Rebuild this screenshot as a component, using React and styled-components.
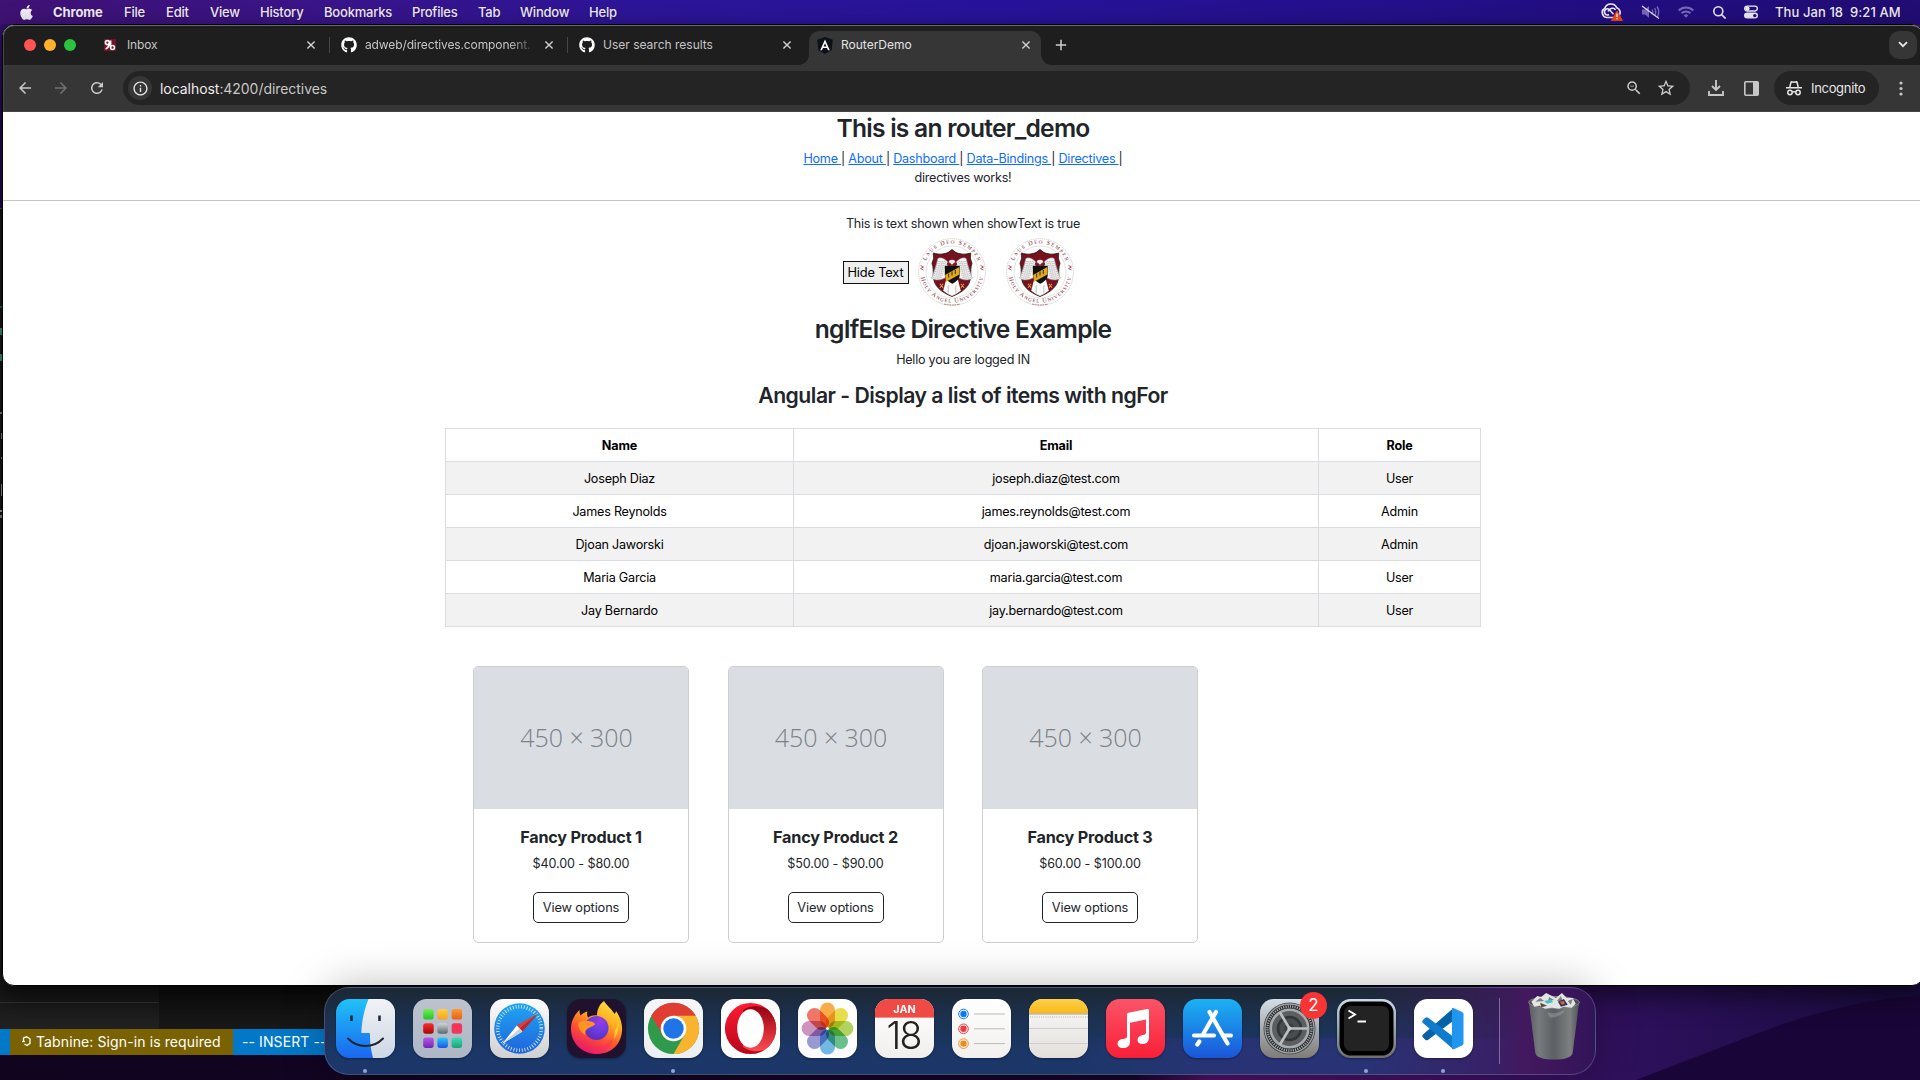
import React from "react";
import styled, { createGlobalStyle } from "styled-components";
import { FaApple, FaGithub } from "react-icons/fa";
import { MdArrowBack, MdArrowForward, MdRefresh, MdInfoOutline, MdZoomOut, MdStarBorder } from "react-icons/md";

const GlobalStyle = createGlobalStyle`
  *, *::before, *::after { box-sizing: border-box; }
  html, body { margin: 0; height: 1080px; overflow: hidden; background: #10041f; }
  body { font-family: Inter, "Liberation Sans", sans-serif; }
  h3, h4, h5, p { margin: 0; }
`;

const Desktop = styled.div`
  position: relative;
  width: 1920px;
  height: 1080px;
  overflow: hidden;
  background: linear-gradient(180deg, #38106e 0, #250a52 120px, #14052b 800px, #10041f 100%);
`;

const Wallpaper = styled.svg`
  position: absolute;
  left: 0;
  bottom: 0;
`;

/* ---------- menu bar ---------- */

const MenuBar = styled.header`
  position: relative;
  display: flex;
  align-items: center;
  justify-content: space-between;
  height: 24px;
  padding: 0 18px 0 18px;
  background: linear-gradient(90deg, #3f1274 0, #3a1488 300px, #2c1598 640px, #27139a 1000px, #220e80 1650px, #220d74 100%);
  color: #f1edf8;
  font-size: 13px;
  text-shadow: 0 1px 2px rgba(0, 0, 0, 0.25);
`;

const MenuGroup = styled.div`
  display: flex;
  align-items: center;
  height: 24px;
`;

const MenuItem = styled.span`
  width: ${(p) => p.$w}px;
  font-weight: ${(p) => (p.$bold ? 700 : 500)};
  letter-spacing: ${(p) => p.$ls ?? -0.2}px;
  white-space: nowrap;
`;

const StatusIcon = styled.svg`
  display: block;
  margin-right: ${(p) => p.$gap}px;
`;

/* ---------- background editor window ---------- */

const Editor = styled.section`
  position: absolute;
  left: 0;
  top: 208px;
  width: 1480px;
  height: 847px;
  display: flex;
  flex-direction: column;
  justify-content: flex-end;
  border-top: 1px solid #555;
  background:
    linear-gradient(#2f6e50, #2f6e50) 0 97px / 2px 2px no-repeat,
    linear-gradient(#3f9a72, #3f9a72) 0 119px / 2px 7px no-repeat,
    linear-gradient(#3f9a72, #3f9a72) 0 145px / 2px 7px no-repeat,
    linear-gradient(#9c8466, #9c8466) 0 203px / 2px 2px no-repeat,
    linear-gradient(#888, #888) 1px 224px / 1px 6px no-repeat,
    linear-gradient(#9c8466, #9c8466) 1px 248px / 1px 2px no-repeat,
    linear-gradient(#999, #999) 1px 275px / 1px 12px no-repeat,
    linear-gradient(#aaa, #aaa) 0 301px / 2px 2px no-repeat,
    linear-gradient(#888, #888) 0 306px / 2px 3px no-repeat,
    #171717;
`;

const EditorPanes = styled.div`
  display: flex;
  height: 44px;
  background: linear-gradient(180deg, #0d0d0d, #191919);
`;

const SidePane = styled.div`
  width: 159px;
  height: 44px;
  padding-top: 17px;
  background: linear-gradient(180deg, #141414, #222222);
  &::before {
    content: "";
    display: block;
    height: 1px;
    background: #333;
  }
`;

const StatusBar = styled.div`
  display: flex;
  align-items: center;
  height: 26px;
  padding-left: 10px;
  background: #0178c8;
  color: #fff;
  font-size: 14px;
  white-space: nowrap;
`;

const TabnineItem = styled.div`
  display: flex;
  align-items: center;
  gap: 4px;
  width: 223px;
  height: 26px;
  padding: 0 0 2px 11px;
  background: #7a6203;
  letter-spacing: 0.11px;
`;

const ModeItem = styled.div`
  padding: 0 0 2px 9px;
  letter-spacing: 0.1px;
`;

/* ---------- browser window ---------- */

const BrowserWindow = styled.main`
  position: absolute;
  left: 2px;
  top: 24px;
  width: 1922px;
  height: 962px;
  display: flex;
  flex-direction: column;
  border: 1px solid #000;
  border-radius: 12px;
  overflow: hidden;
  background: #fff;
  box-shadow: 0 10px 28px rgba(0, 0, 0, 0.6);
`;

const TabStrip = styled.div`
  display: flex;
  align-items: center;
  height: 40px;
  flex: none;
  padding: 0 0 2px 20px;
  background: #1e1e1e;
  border-top: 1px solid #67676b;
  border-left: 1px solid #4a4a4a;
  border-radius: 11px 11px 0 0;
`;

const TrafficLights = styled.div`
  display: flex;
  gap: 8px;
  width: 80px;
`;

const Light = styled.span`
  width: 12px;
  height: 12px;
  border-radius: 50%;
  background: ${(p) => p.$color};
`;

const Tab = styled.div`
  position: relative;
  display: flex;
  align-items: center;
  width: ${(p) => p.$w}px;
  height: ${(p) => (p.$active ? 34 : 16)}px;
  align-self: ${(p) => (p.$active ? "flex-end" : "center")};
  padding: ${(p) => (p.$active ? "0 10px 6px 8px" : "0 13px 0 0")};
  margin-right: ${(p) => p.$gap ?? 0}px;
  margin-bottom: ${(p) => (p.$active ? -2 : 0)}px;
  border-right: ${(p) => (p.$divider ? "1px solid #474747" : "1px solid transparent")};
  color: ${(p) => (p.$active ? "#e3e3e3" : "#c5c5c5")};
  background: ${(p) => (p.$active ? "#363636" : "transparent")};
  border-radius: ${(p) => (p.$active ? "10px 10px 0 0" : 0)};
  ${(p) =>
    p.$active &&
    `
    border-right: 0;
    &::before, &::after {
      content: "";
      position: absolute;
      bottom: 0;
      width: 10px;
      height: 10px;
    }
    &::before {
      left: -10px;
      background: radial-gradient(circle at 0 0, transparent 9.5px, #363636 10px);
    }
    &::after {
      right: -10px;
      background: radial-gradient(circle at 100% 0, transparent 9.5px, #363636 10px);
    }
  `}
`;

const TabTitle = styled.span`
  flex: 1;
  margin-left: ${(p) => p.$ml ?? 8}px;
  margin-right: 12px;
  font-size: 12px;
  line-height: 16px;
  letter-spacing: ${(p) => p.$ls ?? 0}px;
  white-space: nowrap;
  ${(p) => p.$fade && "mask-image: linear-gradient(90deg, #000 86%, rgba(0, 0, 0, 0.2) 100%);"}
`;

const CloseIcon = () => (
  <svg width="10" height="10" viewBox="0 0 10 10" stroke="#cfcfcf" strokeWidth="1.4">
    <path d="M1.4 1.4l7.2 7.2M8.6 1.4L1.4 8.6" />
  </svg>
);

const NewTab = styled.div`
  display: flex;
  flex: 1;
  padding-left: 14px;
`;

const TabSearch = styled.div`
  display: flex;
  align-items: center;
  justify-content: center;
  width: 28px;
  height: 28px;
  margin-right: 6px;
  border-radius: 10px;
  background: #363636;
`;

const Toolbar = styled.div`
  display: flex;
  align-items: center;
  height: 47px;
  flex: none;
  padding-left: 12px;
  background: #363636;
  border-left: 1px solid #4a4a4a;
  border-bottom: 1px solid #444;
  color: #c9c9c9;
`;

const NavIcon = styled.span`
  display: flex;
  width: ${(p) => p.$w ?? 36}px;
  opacity: ${(p) => (p.$off ? 0.4 : 1)};
`;

const Omnibox = styled.div`
  display: flex;
  align-items: center;
  width: 1567px;
  height: 34px;
  padding: 0 14px 0 5px;
  border-radius: 17px;
  background: #242424;
`;

const SiteInfo = styled.span`
  display: flex;
  align-items: center;
  justify-content: center;
  width: 24px;
  height: 24px;
  margin-right: 8px;
  border-radius: 50%;
  background: #363636;
  color: #e3e3e3;
`;

const Url = styled.span`
  flex: 1;
  font-size: 14px;
  letter-spacing: -0.05px;
  color: #c7c7c7;
  b { font-weight: 400; color: #ececec; }
`;

const ToolIcons = styled.div`
  display: flex;
  align-items: center;
  color: #c7c7c7;
`;

const Incognito = styled.div`
  display: flex;
  align-items: center;
  gap: 9px;
  width: 105px;
  height: 34px;
  margin: 0 20px 0 15px;
  padding-left: 12px;
  border-radius: 17px;
  background: #242424;
  color: #e6e6e6;
  font-size: 13px;
  letter-spacing: -0.32px;
`;

/* ---------- page ---------- */

const Page = styled.div`
  display: flex;
  flex-direction: column;
  flex: 1;
  color: #212529;
  font-size: 12.6px;
  line-height: 19px;
  text-align: center;
`;

const Heading = styled.h3`
  margin-top: ${(p) => p.$mt}px;
  font-size: ${(p) => p.$size}px;
  font-weight: 600;
  line-height: 30px;
  letter-spacing: ${(p) => p.$ls}px;
`;

const Line = styled.p`
  margin-top: ${(p) => p.$mt ?? 0}px;
  height: 19px;
  letter-spacing: ${(p) => p.$ls ?? -0.24}px;
  white-space: pre;
`;

const RouteLink = styled.a`
  color: #0d6efd;
  text-decoration: underline;
`;

const Rule = styled.hr`
  width: 100%;
  height: 1px;
  margin: 13px 0 0;
  border: 0;
  background: #c4c6c8;
`;

const LogoRow = styled.div`
  display: flex;
  align-items: center;
  justify-content: center;
  margin-top: 5px;
  height: 68px;
  padding-right: 10px;
`;

const HideButton = styled.button`
  width: 66px;
  height: 23px;
  padding: 0;
  margin-right: 9px;
  border: 1px solid #111;
  background: #efefef;
  color: #000;
  font: 400 12.8px/19px Inter, "Liberation Sans", sans-serif;
  letter-spacing: -0.15px;
`;

const Seal = styled.svg`
  display: block;
  margin: 0 ${(p) => p.$gap}px 0 0;
`;

const Table = styled.div`
  display: grid;
  grid-template-columns: 348px 525px 162px;
  width: 1036px;
  margin: 18px 0 0 442px;
  border: solid #d9dce0;
  border-width: 1px 0 0 1px;
  color: #000;
`;

const Cell = styled.div`
  height: 33px;
  padding-top: 7px;
  border: solid #d9dce0;
  border-width: 0 1px 1px 0;
  background: ${(p) => (p.$striped ? "#f2f2f2" : "#fff")};
  font-weight: ${(p) => (p.$head ? 700 : 400)};
  letter-spacing: ${(p) => (p.$head ? -0.15 : -0.22)}px;
`;

const Cards = styled.div`
  display: flex;
  gap: 38.5px;
  margin: 39px 0 0 470px;
`;

const Card = styled.article`
  display: flex;
  flex-direction: column;
  align-items: center;
  width: 216px;
  height: 277px;
  overflow: hidden;
  border: 1px solid #cfcfcf;
  border-radius: 5px;
`;

const Placeholder = styled.div`
  display: flex;
  justify-content: center;
  width: 100%;
  height: 142px;
  padding: 53px 9px 0 0;
  background: #dadde2;
  color: #7c8287;
  font: 300 25px/34px "Open Sans", "Noto Sans", sans-serif;
  letter-spacing: -0.05px;
`;

const CardTitle = styled.h5`
  margin-top: 18px;
  font-size: 16.2px;
  line-height: 20px;
  font-weight: 700;
  letter-spacing: -0.2px;
`;

const Price = styled.p`
  margin-top: 7px;
  letter-spacing: -0.12px;
`;

const OptionsButton = styled.button`
  width: 96px;
  height: 31px;
  margin-top: 19px;
  padding: 0;
  border: 1px solid #212529;
  border-radius: 5px;
  background: #fff;
  color: #212529;
  font: 400 12.8px/19px Inter, "Liberation Sans", sans-serif;
  letter-spacing: -0.13px;
`;

/* ---------- dock ---------- */

const Dock = styled.footer`
  position: absolute;
  left: 324px;
  top: 987px;
  width: 1272px;
  height: 88px;
  display: flex;
  align-items: flex-start;
  gap: 18px;
  padding: 11px 0 0 11px;
  border: 1px solid rgba(160, 180, 220, 0.3);
  border-radius: 25px;
  background:
    linear-gradient(90deg, transparent 1040px, rgba(64, 24, 96, 0.7) 1170px, #43185f 1200px, #331458 100%),
    linear-gradient(90deg, transparent 740px, rgba(52, 48, 130, 0.5) 900px, rgba(52, 48, 130, 0.5) 100%) 0 50px no-repeat,
    linear-gradient(180deg, #1c2733 0, #1c3150 35%, #1b3767 75%, #1c3669 100%);
  box-shadow: 0 0 44px rgba(0, 0, 0, 0.28);
`;

const DockItem = styled.div`
  position: relative;
  display: flex;
  flex-direction: column;
  align-items: center;
  width: 59px;
  height: 76px;
  svg { display: block; overflow: visible; filter: drop-shadow(0 1px 1px rgba(0, 0, 0, 0.35)); }
  &::after {
    content: "";
    width: 4px;
    height: 4px;
    margin: 11px 1px 0 0;
    border-radius: 50%;
    background: ${(p) => (p.$running ? "#93a3da" : "transparent")};
  }
`;

const Badge = styled.span`
  position: absolute;
  right: -8px;
  top: -7px;
  width: 27px;
  height: 27px;
  border-radius: 50%;
  background: #f73534;
  color: #fff;
  font-size: 17px;
  line-height: 27px;
  text-align: center;
`;

const DockDivider = styled.i`
  width: 1px;
  height: 66px;
  margin: -1px 9px 0 8px;
  background: rgba(190, 165, 220, 0.55);
`;

const TrashIcon = styled.svg`
  display: block;
  margin-top: -6px;
`;

/* ---------- drawings ---------- */

const feathers = Array.from({ length: 9 }, (_, i) => i);

function UniversitySeal({ id, gap }) {
  return (
    <Seal $gap={gap} width="68" height="68" viewBox="0 0 68 68">
      <defs>
        <path id={`${id}-top`} d="M6.2 31A27.9 27.9 0 0 1 61.8 31" />
        <path id={`${id}-bottom`} d="M2.6 38A31.8 31.8 0 0 0 65.4 38" />
      </defs>
      <circle cx="34" cy="34" r="33.3" fill="#fff" stroke="#c4bcbd" strokeWidth=".7" strokeDasharray="1.4 .8" />
      <circle cx="34" cy="34" r="26" fill="none" stroke="#d9d9d9" strokeWidth=".7" />
      <g fill="#7b1a2a" fontFamily="Liberation Serif, serif">
        <text fontSize="6" textAnchor="middle">
          <textPath href={`#${id}-top`} startOffset="50%" textLength="66">
            L<tspan fontSize="5">AUS</tspan> D<tspan fontSize="5">EO</tspan> S<tspan fontSize="5">EMPER</tspan>
          </textPath>
        </text>
        <text fontSize="6" textAnchor="middle">
          <textPath href={`#${id}-bottom`} startOffset="50%" textLength="86">
            H<tspan fontSize="5">OLY</tspan> A<tspan fontSize="5">NGEL</tspan> U<tspan fontSize="5">NIVERSITY</tspan>
          </textPath>
        </text>
      </g>
      <g fill="none" stroke="#b84a55" strokeWidth=".9">
        <path d="M2.5 27.5l3 1.5-3 1.5 3 1.5M62.5 27.5l3 1.5-3 1.5 3 1.5" />
      </g>
      <g transform="translate(34 35) scale(1.1 1.02) translate(-34 -35)">
        <path d="M34 12l3 2.5c4 2.3 9 2.6 14 1-.8 4 0 7 1.200 10-1.5 4-1 8-1.200 13-.8 10-7 15-17 19.500-10-4.500-16.200-9.500-17-19.500-.2-5 .3-9-1.200-13 1.200-3 2-6 1.200-10 5 1.600 10 1.300 14-1z" fill="#76111f" stroke="#2b1a14" strokeWidth=".8" />
        <path d="M29 40h10l3 12.500q-4 3.500-8 5-4-1.500-8-5z" fill="#fbfbfb" />
        {[0, 1].map((side) => (
          <g key={side} transform={side ? "translate(68 0) scale(-1 1)" : undefined}>
            <path d="M30 24c-3-3.500-7-5-9-3-1 5-3 12-5.500 19 3 3 8 2 12 0l3-4z" fill="#f4f4f4" stroke="#8a8a8a" strokeWidth=".5" />
            {feathers.map((i) => (
              <path key={i} d={`M${20.500 - i * 0.500} ${23 + i * 2}q4 2.200 8.500 0`} fill="none" stroke="#8d8d8d" strokeWidth=".6" strokeDasharray="1.500 .5" />
            ))}
          </g>
        ))}
        <circle cx="34" cy="25" r="3.100" fill="#efe7e2" />
        <path d="M29 26.500c1-2 2-2.500 3-1.500l2 2 2-2c1-1 2-.5 3 1.500l-2 1.500h-6z" fill="#7b1a2a" />
        <path d="M27.500 28h13.500v9c0 4-3 6.500-6.700 8.500-3.800-2-6.800-4.500-6.800-8.500z" fill="#111" />
        <path d="M27.700 37l13-8v7.500l-12 7z" fill="#e3a81c" />
        <path d="M31 35.500v4M34 33.500v4M37 32v4" stroke="#32250a" strokeWidth=".9" />
        <path d="M30.500 47v8M37.500 47v8" stroke="#aaa" strokeWidth=".7" />
        <path d="M23 45.500l3 4M26 45.500l-3 4M42 45.500l3 4M45 45.500l-3 4" stroke="#d8973a" strokeWidth="1" />
      </g>
      <path d="M26 66q8 2 16 0" fill="none" stroke="#b0606a" strokeWidth=".8" strokeDasharray="2 .6" />
    </Seal>
  );
}

const Tile = ({ id, from, to, stroke, children }) => (
  <svg width="59" height="59" viewBox="0 0 59 59">
    <defs>
      <linearGradient id={id} x1="0" y1="0" x2="0" y2="1">
        <stop offset="0" stopColor={from} />
        <stop offset="1" stopColor={to} />
      </linearGradient>
      <clipPath id={`${id}-clip`}>
        <rect width="59" height="59" rx="13.500" />
      </clipPath>
    </defs>
    <g clipPath={`url(#${id}-clip)`}>
      <rect width="59" height="59" fill={`url(#${id})`} />
      {children}
    </g>
    {stroke && <rect x=".5" y=".5" width="58" height="58" rx="13" fill="none" stroke={stroke} />}
  </svg>
);

const Finder = () => (
  <Tile id="finder" from="#1fc3f8" to="#1a66ef">
    <defs>
      <linearGradient id="finder-face" x1="0" y1="0" x2="0" y2="1">
        <stop offset="0" stopColor="#f1f2f5" />
        <stop offset="1" stopColor="#cdd8e6" />
      </linearGradient>
    </defs>
    <path d="M32.500 0C28 11 25.800 22 25.300 34H33c.8 0 1 .4 1 1.200C33.800 43 34.800 51 37 59h22V0z" fill="url(#finder-face)" />
    <path d="M15.500 16.500v5.500M43.500 16.500v5.500" stroke="#1c2b3c" strokeWidth="2.600" />
    <path d="M12 39.500c9.500 10 25.500 10 35 0" fill="none" stroke="#1c2632" strokeWidth="2" strokeLinecap="round" />
  </Tile>
);

const padColors = [
  ["#6ef04f", "#27c32b"], ["#ffd040", "#f7a11c"], ["#ff9a2c", "#e5601b"],
  ["#fb2d2d", "#a90508"], ["#cfd6da", "#5f6669"], ["#ff2f56", "#ea3b5b"],
  ["#b55ae8", "#7427b5"], ["#29c9f7", "#1b55e6"], ["#41dcb8", "#1ba275"],
];
const Launchpad = () => (
  <Tile id="launchpad" from="#bcc3ce" to="#aeb7c6">
    {padColors.map(([a, b], i) => (
      <g key={a}>
        <linearGradient id={`pad-${i}`} x1="0" y1="0" x2="0" y2="1">
          <stop offset="0" stopColor={a} />
          <stop offset="1" stopColor={b} />
        </linearGradient>
        <rect x={10.200 + (i % 3) * 14.200} y={10 + Math.floor(i / 3) * 14.200} width="10.500" height="10.500" rx="2.600" fill={`url(#pad-${i})`} />
      </g>
    ))}
  </Tile>
);

const Safari = () => (
  <Tile id="safari" from="#fdfdfd" to="#d0d0d2">
    <defs>
      <linearGradient id="safari-dial" x1="0" y1="0" x2="0" y2="1">
        <stop offset="0" stopColor="#1fa6f2" />
        <stop offset="1" stopColor="#1f63dc" />
      </linearGradient>
    </defs>
    <circle cx="29.500" cy="29.500" r="25.300" fill="url(#safari-dial)" />
    <circle cx="29.500" cy="29.500" r="21.800" fill="none" stroke="#e4f1fc" strokeWidth="3.600" strokeDasharray=".8 2.004" />
    <path d="M48 14.500L26.800 26.600l5.600 5.800z" fill="#e23c3a" />
    <path d="M48 14.500L29.600 29.500l2.800 2.900z" fill="#b5282c" />
    <path d="M12 45l14.800-18.400 5.600 5.800z" fill="#fff" />
    <path d="M12 45l17.600-15.500 2.800 2.900z" fill="#cfd3d8" />
  </Tile>
);

const Firefox = () => (
  <Tile id="firefox" from="#20122f" to="#20122f">
    <defs>
      <linearGradient id="fox" x1=".8" y1="0" x2=".3" y2="1">
        <stop offset="0" stopColor="#ffe545" />
        <stop offset=".35" stopColor="#ffab1e" />
        <stop offset=".65" stopColor="#ff5232" />
        <stop offset="1" stopColor="#e4136a" />
      </linearGradient>
      <radialGradient id="fox-globe" cx=".65" cy=".2" r=".9">
        <stop offset="0" stopColor="#9a3ce0" />
        <stop offset=".5" stopColor="#6a3be0" />
        <stop offset="1" stopColor="#5a2bb4" />
      </radialGradient>
    </defs>
    <path d="M37 2c2 4 8 8 10.500 13 1-1 1.500-2 1.500-3 5 7 6.500 14 6 20C54 46 43.500 55 30 55 15.500 55 4.500 45 4 30.500 3.800 23 7 16 12.500 11c0 2 .3 4 1 5.500 2-2 4.500-3.500 7-4-.8 2-.5 4 .5 6 3-2 7-2.500 9-2 0-5 2-11 7-14.500z" fill="url(#fox)" />
    <circle cx="29.500" cy="29" r="12" fill="url(#fox-globe)" />
    <path d="M11 24c4-2 9-2.500 13-1.500 2.500.6 5 2 3.500 3.500-2 1.700-4.500 2-6.500 3.500-2.500 1.500-3.500 4-2 6.500-5-2-8-6.500-8-12z" fill="#ff9423" />
    <path d="M41 17c3 4 7 8 6.500 15 3-3 3.500-7 3-11 2 6 1 14-3.500 19 2-9-1-17-6-23z" fill="#ffd23a" fillOpacity=".8" />
    <path d="M6 34c3 10 13 16 24 14 7-1 12-4 16-9-2 10-9 16-18 15.500C17 54 8 46 6 34z" fill="#f5256a" fillOpacity=".35" />
  </Tile>
);

const Chrome = () => (
  <Tile id="chrome" from="#f5f6f8" to="#eceef1">
    <circle cx="29.500" cy="29.500" r="25.600" fill="#2f9a4c" />
    <path d="M29.500 29.500L7.300 16.700A25.600 25.600 0 0 1 51.700 16.700z" fill="#e03e33" />
    <path d="M29.500 16.700h22.200A25.600 25.600 0 0 1 29.500 55.100L40.600 35.900z" fill="#f9b32e" />
    <path d="M29.500 16.700H7.400l11 19.200z" fill="#e03e33" />
    <circle cx="29.500" cy="29.500" r="12.800" fill="#fff" />
    <circle cx="29.500" cy="29.500" r="10.200" fill="#1f74e8" />
  </Tile>
);

const Opera = () => (
  <Tile id="opera" from="#ffffff" to="#ffffff">
    <defs>
      <linearGradient id="opera-o" x1="0" y1="0" x2="0" y2="1">
        <stop offset="0" stopColor="#ff1b32" />
        <stop offset="1" stopColor="#b5081c" />
      </linearGradient>
      <linearGradient id="opera-in" x1="0" y1="0" x2="0" y2="1">
        <stop offset="0" stopColor="#960010" />
        <stop offset="1" stopColor="#ff4b4f" />
      </linearGradient>
    </defs>
    <circle cx="29.500" cy="29.500" r="25.600" fill="url(#opera-o)" />
    <path d="M22 11c8-5.500 18-4 24.500-.8A25.600 25.600 0 0 1 46.500 48.800C40 54 29 53 22 48z" fill="url(#opera-in)" />
    <ellipse cx="29.500" cy="29.500" rx="13.300" ry="19.300" fill="#fff" />
  </Tile>
);

const petals = ["#f9a02c", "#e6d82d", "#a7cf45", "#53b97c", "#5fade4", "#8a8cd0", "#c884b8", "#f0604f"];
const Petal = styled.rect`
  mix-blend-mode: multiply;
`;
const Photos = () => (
  <Tile id="photos" from="#ffffff" to="#fafafa">
    {petals.map((c, i) => (
      <Petal key={c} x="22" y="3.600" width="15" height="25" rx="7.500" fill={c} fillOpacity=".86" transform={`rotate(${i * 45} 29.5 29.5)`} />
    ))}
    <circle cx="29.500" cy="29.500" r="1.300" fill="#fff" />
  </Tile>
);

const Calendar = () => (
  <Tile id="calendar" from="#ffffff" to="#f1efed">
    <rect width="59" height="18.600" fill="#f04a45" />
    <text x="29.500" y="13.600" textAnchor="middle" fontFamily="Inter, sans-serif" fontSize="10.800" fontWeight="700" fill="#fff">JAN</text>
    <text x="28.500" y="49.800" textAnchor="middle" fontFamily="Inter, sans-serif" fontSize="37.500" fontWeight="300" letterSpacing="-1.800" fill="#222">18</text>
  </Tile>
);

const Reminders = () => (
  <Tile id="reminders" from="#ffffff" to="#f2f0ee">
    {["#0a78ff", "#f23a3c", "#f28a1c"].map((c, i) => (
      <g key={c}>
        <circle cx="11.500" cy={15 + i * 14.800} r="4.800" fill="#fff" stroke={c} strokeWidth="1" />
        <circle cx="11.500" cy={15 + i * 14.800} r="3.200" fill={c} />
        <path d={`M22 ${15 + i * 14.800}h31`} stroke="#b9bbbe" strokeWidth="1" />
      </g>
    ))}
  </Tile>
);

const Notes = () => (
  <Tile id="notes" from="#fafafa" to="#e3dfdb">
    <defs>
      <linearGradient id="notes-top" x1="0" y1="0" x2="0" y2="1">
        <stop offset="0" stopColor="#fdd04a" />
        <stop offset="1" stopColor="#fab818" />
      </linearGradient>
    </defs>
    <rect width="59" height="14.500" fill="url(#notes-top)" />
    <path d="M0 15h59" stroke="#a19b92" strokeWidth="1" />
    <path d="M1 18h58" stroke="#c6c2be" strokeWidth="1.400" strokeDasharray=".9 1.300" />
    <path d="M0 29.500h59M0 44.500h59" stroke="#cbc8c5" strokeWidth=".9" />
  </Tile>
);

const Music = () => (
  <Tile id="music" from="#fb5468" to="#f91f37">
    <path d="M21 15.500c0-1 .5-1.600 1.500-1.800L41 10c1.500-.3 2 .4 2 1.600V38.500c0 4.500-3 6.500-6.500 6.500-3 0-5-1.500-5-4s2-4.500 5-5c2.500-.4 3.500-.8 3.500-2.500V20.500L24 23.800v19c0 4.500-3 6.300-6.800 6.300-3.200 0-5.700-1.600-5.700-4.300 0-2.800 2-4.300 5-4.800 3-.5 4.500-.7 4.500-2.500z" fill="#fff" />
  </Tile>
);

const AppStore = () => (
  <Tile id="appstore" from="#1bb2f4" to="#1a56d8">
    <g stroke="#fff" strokeWidth="4.200" strokeLinecap="round">
      <path d="M33 13L20.500 34.500M16.300 42.500l-2 3" />
      <path d="M26.500 13L44.500 44.500" />
      <path d="M11 36.500h20M40 36.500h8" />
    </g>
  </Tile>
);

const Settings = () => (
  <Tile id="settings" from="#d3dfe6" to="#7f7b79">
    <circle cx="29.500" cy="29.500" r="26" fill="#43474a" />
    <circle cx="29.500" cy="29.500" r="24.500" fill="#2b2d2f" stroke="#9ea2a5" strokeWidth="1.300" />
    <circle cx="29.500" cy="29.500" r="22" fill="none" stroke="#a7abae" strokeWidth="2.400" strokeDasharray="1.100 1.200" />
    <circle cx="29.500" cy="29.500" r="18.800" fill="#5b5f62" stroke="#a7abae" strokeWidth="2.600" />
    <circle cx="29.500" cy="29.500" r="11.500" fill="#4a4d50" stroke="#323537" strokeWidth="2.600" />
    <circle cx="29.500" cy="29.500" r="5" fill="#3b3e40" />
    <path d="M29.500 29.500H48M29.500 29.500L20 13.500M29.500 29.500L20 45.500" stroke="#b9bdc0" strokeWidth="2.600" />
    <circle cx="29.500" cy="29.500" r="2" fill="#c6cacc" />
  </Tile>
);

const Terminal = () => (
  <Tile id="terminal" from="#c6dbe8" to="#6d6d6d">
    <rect x="2.500" y="2.500" width="54" height="54" rx="11.500" fill="#000" />
    <rect x="7" y="7" width="45" height="45" rx="6.500" fill="#232323" />
    <path d="M11.500 11.500l6.500 4-6.500 4" fill="none" stroke="#fff" strokeWidth="1.900" />
    <path d="M20.500 22.500H29" stroke="#fff" strokeWidth="1.800" />
  </Tile>
);

const VSCode = () => (
  <Tile id="vscode" from="#ffffff" to="#ffffff">
    <path d="M39 9.500L9 35.500c-1 1-1 2 0 3l2.300 2.200c.9.800 1.900.8 2.900 0L39 22z" fill="#0662a8" />
    <path d="M39 50L9 24c-1-1-1-2 0-3l2.300-2.200c.9-.8 1.900-.8 2.900 0L39 37.500z" fill="#0f7bcd" />
    <path d="M38 9.500c.6-.5 1.300-.6 2-.3l8 3.800c1 .5 1.500 1.200 1.500 2.200v29c0 1-.5 1.800-1.500 2.300l-8 3.700c-.7.300-1.400.2-2-.3z" fill="#2196ee" />
  </Tile>
);

const Trash = () => (
  <TrashIcon width="54" height="69" viewBox="0 0 54 70">
    <defs>
      <linearGradient id="bin" x1="0" y1="0" x2="1" y2="0">
        <stop offset="0" stopColor="#5b5e60" />
        <stop offset=".2" stopColor="#777b7d" />
        <stop offset=".5" stopColor="#5c6062" />
        <stop offset=".82" stopColor="#7c8081" />
        <stop offset="1" stopColor="#505355" />
      </linearGradient>
    </defs>
    <path d="M1.500 9.500L8 60.500c.6 4.500 8 7 19 7s18.400-2.500 19-7L52.500 9.500z" fill="url(#bin)" />
    <ellipse cx="27" cy="9.500" rx="25.700" ry="6" fill="#4a4c4f" stroke="#85888a" strokeWidth="1" />
    <path d="M4 9l6-6 4 1 5-4 6 3 4 2 6-5 5 5 6 0 3 6-4 4-8-1-5 2-7-1-7 1-6-3-5 1z" fill="#e4e4e4" />
    <path d="M8 9l5-4 4 3zM30 8l4-5 2 6zM41 8l5-2-2 6zM22 4l5 3-6 1z" fill="#7b7e82" />
    <path d="M17 8l7-1.500 2 3-6 1.500z" fill="#3cc6c4" />
    <path d="M31 9l6-3 4 6-7 2z" fill="#32355a" />
    <path d="M33 9l4-1 1 3-3 1z" fill="#d8622e" />
    <path d="M13 10l7 3-6 1.500z" fill="#5b4540" />
    <path d="M20 20q12 2 19-4-4 9-16 9z" fill="#b5b8b9" fillOpacity=".35" />
  </TrashIcon>
);

const dockApps = [
  { name: "finder", Icon: Finder, running: true },
  { name: "launchpad", Icon: Launchpad },
  { name: "safari", Icon: Safari },
  { name: "firefox", Icon: Firefox },
  { name: "chrome", Icon: Chrome, running: true },
  { name: "opera", Icon: Opera },
  { name: "photos", Icon: Photos },
  { name: "calendar", Icon: Calendar },
  { name: "reminders", Icon: Reminders },
  { name: "notes", Icon: Notes },
  { name: "music", Icon: Music },
  { name: "appstore", Icon: AppStore },
  { name: "settings", Icon: Settings, badge: 2 },
  { name: "terminal", Icon: Terminal, running: true },
  { name: "vscode", Icon: VSCode, running: true },
];

const menus = [
  ["File", 42], ["Edit", 44], ["View", 50], ["History", 64], ["Bookmarks", 88],
  ["Profiles", 66], ["Tab", 42], ["Window", 69], ["Help", 40],
];

const users = [
  ["Joseph Diaz", "joseph.diaz@test.com", "User"],
  ["James Reynolds", "james.reynolds@test.com", "Admin"],
  ["Djoan Jaworski", "djoan.jaworski@test.com", "Admin"],
  ["Maria Garcia", "maria.garcia@test.com", "User"],
  ["Jay Bernardo", "jay.bernardo@test.com", "User"],
];

const products = [
  ["Fancy Product 1", "$40.00 - $80.00"],
  ["Fancy Product 2", "$50.00 - $90.00"],
  ["Fancy Product 3", "$60.00 - $100.00"],
];

const routes = ["Home", "About", "Dashboard", "Data-Bindings", "Directives"];

function TopMenu() {
  return (
    <MenuBar>
      <MenuGroup>
        <MenuItem $w={35}><FaApple size={17} style={{ display: "block" }} /></MenuItem>
        <MenuItem $w={71} $ls={-0.1} $bold>Chrome</MenuItem>
        {menus.map(([label, w]) => <MenuItem key={label} $w={w}>{label}</MenuItem>)}
      </MenuGroup>
      <MenuGroup>
        <StatusIcon $gap={18} width="23" height="18" viewBox="0 0 23 18">
          <path d="M6.500 14.500A5 5 0 0 1 4.800 5.200a6.500 6.500 0 0 1 12-.4 5 5 0 0 1 2.500 7.500q-2 2.500-5 2.200z" fill="none" stroke="#efeaf8" strokeWidth="1.700" />
          <path d="M9 11.500a3 3 0 1 1 .5-4.800l4 4.500M8 8.500c1.500-3.500 6-4.500 7.500-1.500" fill="none" stroke="#efeaf8" strokeWidth="1.600" />
          <path d="M17 8l5.500 9.500h-11z" fill="#f04a1c" stroke="#f04a1c" strokeLinejoin="round" />
          <path d="M17 10.500v3.500M17 15v1.300" stroke="#fff" strokeWidth="1.300" />
        </StatusIcon>
        <StatusIcon $gap={18} width="19" height="16" viewBox="0 0 19 16" fill="none" stroke="#7c68bd" strokeWidth="1.400">
          <path d="M1 5.500h3L8 2v12l-4-3.500H1z" fill="#7c68bd" stroke="none" />
          <path d="M11 5.500q1.500 2.500 0 5M13.500 4q2.500 4 0 8M16 2.500q3.500 5.500 0 11" />
          <path d="M1 2l17 12.500" stroke="#e8e2f5" strokeWidth="1.200" />
        </StatusIcon>
        <StatusIcon $gap={19} width="16" height="12" viewBox="0 0 16 12" fill="none" stroke="#7c68bd" strokeWidth="2.100">
          <path d="M.8 4.500a10.200 10.200 0 0 1 14.400 0M3.500 7.300a6.400 6.400 0 0 1 9 0" />
          <path d="M8 11.800L5.700 9.400a3.300 3.300 0 0 1 4.600 0z" fill="#7c68bd" stroke="none" />
        </StatusIcon>
        <StatusIcon $gap={18} width="13" height="13" viewBox="0 0 13 13" fill="none" stroke="#efeaf8" strokeWidth="1.600">
          <circle cx="5.300" cy="5.300" r="4.500" />
          <path d="M8.600 8.600l4 4" />
        </StatusIcon>
        <StatusIcon $gap={17} width="14" height="14" viewBox="0 0 14 14">
          <rect x=".7" y="1.200" width="12.600" height="4.800" rx="2.400" fill="none" stroke="#efeaf8" strokeWidth="1.300" />
          <circle cx="3.400" cy="3.600" r="2.200" fill="#efeaf8" />
          <rect y="7.600" width="14" height="6" rx="3" fill="#efeaf8" />
          <circle cx="10.800" cy="10.600" r="1.700" fill="#220d74" />
        </StatusIcon>
        <MenuItem $w={75} $ls={0.08}>Thu Jan 18</MenuItem>
        <MenuItem $w={52} $ls={0.08}>9:21 AM</MenuItem>
      </MenuGroup>
    </MenuBar>
  );
}

function Browser() {
  return (
    <BrowserWindow>
      <TabStrip>
        <TrafficLights>
          <Light $color="#ff5450" />
          <Light $color="#fdb12c" />
          <Light $color="#2bc23f" />
        </TrafficLights>
        <Tab $w={226} $gap={11} $divider>
          <svg width="12" height="12" viewBox="0 0 12 12">
            <rect width="12" height="12" fill="#7c0f2a" />
            <g fill="none" stroke="#fff" strokeWidth="1.600">
              <circle cx="3.400" cy="3.600" r="2" />
              <path d="M5.400 3.600c0 3-1.500 5.400-3.800 6.400M6.600 1.500v7" />
              <circle cx="8.500" cy="8.500" r="2" />
            </g>
          </svg>
          <TabTitle $ml={11} $ls={-0.15}>Inbox</TabTitle>
          <CloseIcon />
        </Tab>
        <Tab $w={227} $gap={11} $divider>
          <FaGithub size={16} color="#fff" />
          <TabTitle $fade $ls={-0.12}>adweb/directives.component.</TabTitle>
          <CloseIcon />
        </Tab>
        <Tab $w={227} $gap={3}>
          <FaGithub size={16} color="#fff" />
          <TabTitle>User search results</TabTitle>
          <CloseIcon />
        </Tab>
        <Tab $w={232} $active>
          <svg width="16" height="17" viewBox="0 0 16 17">
            <path d="M8 0l7.800 2.800-1.200 10.400L8 17l-6.600-3.800L.2 2.800z" fill="#0c1119" />
            <path d="M8 2.500L3.200 13.300H5l1-2.400h4l1 2.400h1.800zm0 3.700l1.400 3.200H6.600z" fill="#fff" />
          </svg>
          <TabTitle>RouterDemo</TabTitle>
          <CloseIcon />
        </Tab>
        <NewTab>
          <svg width="12" height="12" viewBox="0 0 12 12" stroke="#d0d0d0" strokeWidth="1.500">
            <path d="M6 .8v10.400M.8 6h10.400" />
          </svg>
        </NewTab>
        <TabSearch>
          <svg width="10" height="7" viewBox="0 0 10 7" fill="none" stroke="#e6e6e6" strokeWidth="1.800">
            <path d="M1 1.200l4 4 4-4" />
          </svg>
        </TabSearch>
      </TabStrip>
      <Toolbar>
        <NavIcon><MdArrowBack size={18} /></NavIcon>
        <NavIcon $off><MdArrowForward size={18} /></NavIcon>
        <NavIcon $w={35}><MdRefresh size={18} /></NavIcon>
        <Omnibox>
          <SiteInfo><MdInfoOutline size={17} /></SiteInfo>
          <Url><b>localhost</b>:4200/directives</Url>
          <MdZoomOut size={18} />
          <MdStarBorder size={20} style={{ marginLeft: 13 }} />
        </Omnibox>
        <ToolIcons>
          <svg width="16" height="16" viewBox="0 0 16 16" fill="none" stroke="currentColor" strokeWidth="1.900" style={{ marginLeft: 18 }}>
            <path d="M8 0v9.500M4 6l4 4 4-4M1 11v4h14v-4" />
          </svg>
          <svg width="15" height="15" viewBox="0 0 15 15" style={{ marginLeft: 20 }}>
            <rect x=".8" y=".8" width="13.400" height="13.400" rx="1" fill="none" stroke="currentColor" strokeWidth="1.600" />
            <rect x="9" y="1" width="5" height="13" fill="currentColor" />
          </svg>
          <Incognito>
            <svg width="16" height="15" viewBox="0 0 16 15" fill="none" stroke="#e6e6e6" strokeWidth="1.500">
              <path d="M3.800 6L5 1.200q.2-.6.8-.4L8 1.300l2.200-.5q.6-.2.800.4L12.200 6M0 6.700h16" />
              <circle cx="4" cy="11.500" r="2.200" />
              <circle cx="12" cy="11.500" r="2.200" />
              <path d="M6 11.200q2-1 4 0" />
            </svg>
            Incognito
          </Incognito>
          <svg width="4" height="15" viewBox="0 0 4 15" fill="currentColor">
            <circle cx="2" cy="2" r="1.600" />
            <circle cx="2" cy="7.500" r="1.600" />
            <circle cx="2" cy="13" r="1.600" />
          </svg>
        </ToolIcons>
      </Toolbar>
      <Page>
        <Heading $mt={1} $size={24.6} $ls={-0.75}>This is an router_demo</Heading>
        <Line $mt={6}>
          {routes.map((r, i) => (
            <React.Fragment key={r}>
              <RouteLink>{`${r} `}</RouteLink>
              {i < routes.length - 1 ? "| " : "|"}
            </React.Fragment>
          ))}
        </Line>
        <Line>directives works!</Line>
        <Rule />
        <Line $mt={13}>This is text shown when showText is true</Line>
        <LogoRow>
          <HideButton>Hide Text</HideButton>
          <UniversitySeal id="seal-a" gap={20} />
          <UniversitySeal id="seal-b" gap={0} />
        </LogoRow>
        <Heading $mt={8} $size={24.6} $ls={-0.75}>ngIfElse Directive Example</Heading>
        <Line $mt={6}>Hello you are logged IN</Line>
        <Heading as="h4" $mt={11} $size={21.2} $ls={-0.5}>Angular - Display a list of items with ngFor</Heading>
        <Table>
          {["Name", "Email", "Role"].map((h) => <Cell key={h} $head>{h}</Cell>)}
          {users.map((row, i) => row.map((v, j) => <Cell key={`${i}-${j}`} $striped={i % 2 === 0}>{v}</Cell>))}
        </Table>
        <Cards>
          {products.map(([name, price]) => (
            <Card key={name}>
              <Placeholder>450 × 300</Placeholder>
              <CardTitle>{name}</CardTitle>
              <Price>{price}</Price>
              <OptionsButton>View options</OptionsButton>
            </Card>
          ))}
        </Cards>
      </Page>
    </BrowserWindow>
  );
}

export default function App() {
  return (
    <>
      <GlobalStyle />
      <Desktop>
        <Wallpaper width="1920" height="110" viewBox="0 0 1920 110">
          <defs>
            <linearGradient id="wall" x1="0" y1="0" x2="1" y2="0">
              <stop offset="0" stopColor="#10041f" />
              <stop offset=".59" stopColor="#14052a" />
              <stop offset=".63" stopColor="#4a1162" />
              <stop offset=".76" stopColor="#3c1060" />
              <stop offset=".86" stopColor="#2c105a" />
              <stop offset="1" stopColor="#1a0c40" />
            </linearGradient>
          </defs>
          <rect width="1920" height="110" fill="url(#wall)" />
          <path d="M1636 110L1740 70Q1840 30 1920 26V110z" fill="#1a0538" />
        </Wallpaper>
        <Editor>
          <EditorPanes><SidePane /></EditorPanes>
          <StatusBar>
            <TabnineItem>
              <svg width="11" height="11" viewBox="0 0 11 11" fill="none" stroke="#fff" strokeWidth="1.300">
                <path d="M2.500 5V2l3-1.200 3.500 2v4.500L6 9.500 3.500 8" />
                <path d="M1 5.500h3" />
              </svg>
              Tabnine: Sign-in is required
            </TabnineItem>
            <ModeItem>-- INSERT --</ModeItem>
          </StatusBar>
        </Editor>
        <TopMenu />
        <Browser />
        <Dock>
          {dockApps.map(({ name, Icon, running, badge }) => (
            <DockItem key={name} $running={running}>
              <Icon />
              {badge && <Badge>{badge}</Badge>}
            </DockItem>
          ))}
          <DockDivider />
          <Trash />
        </Dock>
      </Desktop>
    </>
  );
}
